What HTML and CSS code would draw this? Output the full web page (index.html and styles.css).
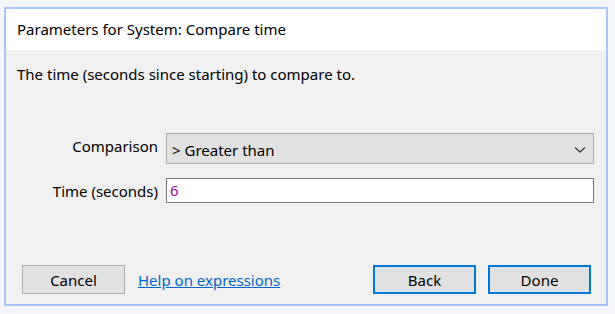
FILE: index.html
```
<!DOCTYPE html>
<html>
<head>
<meta charset="utf-8">
<link rel="stylesheet" href="styles.css">
</head>
<body>
<div class="dialog">
  <div class="titlebar">Parameters for System: Compare time</div>
  <div class="content">
    <p class="desc">The time (seconds since starting) to compare to.</p>
    <div class="form">
      <label class="lbl lbl-cmp">Comparison</label>
      <div class="select">
        <span>&gt; Greater than</span>
        <svg class="chev" width="12" height="8" viewBox="0 0 12 8"><path d="M1 1.5 L6 6 L11 1.5" fill="none" stroke="#404040" stroke-width="1.4"/></svg>
      </div>
      <label class="lbl lbl-time">Time (seconds)</label>
      <div class="input">6</div>
    </div>
    <div class="buttons">
      <div class="btn">Cancel</div>
      <a class="link">Help on expressions</a>
      <div class="spacer"></div>
      <div class="btn focus">Back</div>
      <div class="btn focus">Done</div>
    </div>
  </div>
</div>
</body>
</html>
```
FILE: styles.css
```
html, body {
  margin: 0;
  padding: 0;
  background: #f4f6fb;
  width: 615px;
  height: 314px;
  overflow: hidden;
}
body {
  font-family: "Noto Sans", "Open Sans", sans-serif;
  font-size: 15px;
  color: #000;
}
.dialog {
  margin: 7px 0 0 4px;
  width: 600px;
  height: 295px;
  border: 2px solid #a9c5f5;
  display: flex;
  flex-direction: column;
  background: #f0f0f0;
}
.titlebar {
  background: #fff;
  height: 41px;
  line-height: 41px;
  padding-left: 11px;
  flex: none;
}
.content {
  flex: 1;
  display: flex;
  flex-direction: column;
  padding: 14px 12px 10px 10px;
}
.desc {
  margin: 0 0 0 1px;
  line-height: 20px;
}
.form {
  margin-top: 49px;
  display: grid;
  grid-template-columns: 142px 1fr;
  column-gap: 8px;
  row-gap: 14px;
}
.lbl {
  text-align: right;
  line-height: 20px;
}
.lbl-cmp { align-self: start; padding-top: 3px; }
.lbl-time { align-self: center; }
.select {
  border: 1px solid #adadad;
  background: #e1e1e1;
  display: flex;
  align-items: center;
  justify-content: space-between;
  padding: 2px 7px 0 5px;
  box-sizing: border-box;
  height: 31px;
}
.chev { margin-top: 1px; }
.input {
  height: 25px;
  box-sizing: border-box;
  border: 1px solid #7a7a7a;
  background: #fff;
  color: #a000a8;
  padding-left: 3px;
  line-height: 23px;
}
.buttons {
  margin-top: auto;
  display: flex;
  align-items: center;
  padding-left: 6px;
  padding-right: 3px;
}
.btn {
  width: 103px;
  height: 29px;
  box-sizing: border-box;
  border: 1px solid #adadad;
  background: #e1e1e1;
  display: flex;
  align-items: center;
  justify-content: center;
}
.btn.focus {
  border: 2px solid #0078d7;
  margin-left: 12px;
}
.link {
  margin-left: 13px;
  color: #0066cc;
  text-decoration: underline;
}
.spacer { flex: 1; }
```
